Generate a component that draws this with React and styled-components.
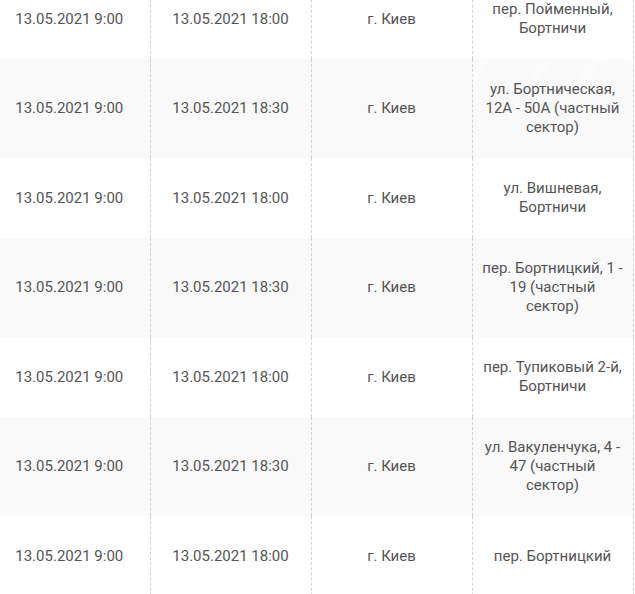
import React from "react";
import styled, { createGlobalStyle } from "styled-components";

const Global = createGlobalStyle`
  html, body { margin: 0; padding: 0; background: #fff; overflow: hidden; }
  body { font-family: Roboto, "Noto Sans", "Liberation Sans", sans-serif; }
`;

const Page = styled.div`
  position: relative;
  width: 635px;
  height: 594px;
  overflow: hidden;
`;

const Table = styled.table`
  border-collapse: collapse;
  table-layout: fixed;
  width: 644px;
  margin: -21px 0 0 -11px;
  font-size: 15px;
  line-height: 19px;
  color: #555;
`;

const Row = styled.tr`
  background: ${(p) => (p.$shaded ? "#f9f9f9" : "#fff")};
`;

const Cell = styled.td`
  width: 161px;
  height: 80px;
  box-sizing: border-box;
  padding: 21px 9px;
  text-align: center;
  vertical-align: middle;
  border-right: 1px dashed #d2d2d2;
`;

const Watermark = styled.svg`
  position: absolute;
  right: 0;
  top: 18px;
  pointer-events: none;
`;

const rows = [
  ["13.05.2021 9:00", "13.05.2021 18:00", "г. Киев", "пер. Пойменный, Бортничи"],
  ["13.05.2021 9:00", "13.05.2021 18:30", "г. Киев", "ул. Бортническая, 12А - 50А (частный сектор)"],
  ["13.05.2021 9:00", "13.05.2021 18:00", "г. Киев", "ул. Вишневая, Бортничи"],
  ["13.05.2021 9:00", "13.05.2021 18:30", "г. Киев", "пер. Бортницкий, 1 - 19 (частный сектор)"],
  ["13.05.2021 9:00", "13.05.2021 18:00", "г. Киев", "пер. Тупиковый 2-й, Бортничи"],
  ["13.05.2021 9:00", "13.05.2021 18:30", "г. Киев", "ул. Вакуленчука, 4 - 47 (частный сектор)"],
  ["13.05.2021 9:00", "13.05.2021 18:00", "г. Киев", "пер. Бортницкий"],
];

export default function App() {
  return (
    <Page>
      <Global />
      <Table>
        <tbody>
          {rows.map((r, i) => (
            <Row key={i} $shaded={i % 2 === 1}>
              {r.map((c, j) => (
                <Cell key={j}>{c}</Cell>
              ))}
            </Row>
          ))}
        </tbody>
      </Table>
      <Watermark width="170" height="70" viewBox="0 0 170 70">
        <g fill="none" stroke="#fff" strokeOpacity="0.35" strokeWidth="9" strokeLinecap="round">
          <path d="M10 58 C 30 20, 55 10, 75 30" />
          <path d="M70 58 C 90 30, 110 22, 128 40" />
          <path d="M120 58 C 135 35, 155 30, 166 44" />
        </g>
      </Watermark>
    </Page>
  );
}
